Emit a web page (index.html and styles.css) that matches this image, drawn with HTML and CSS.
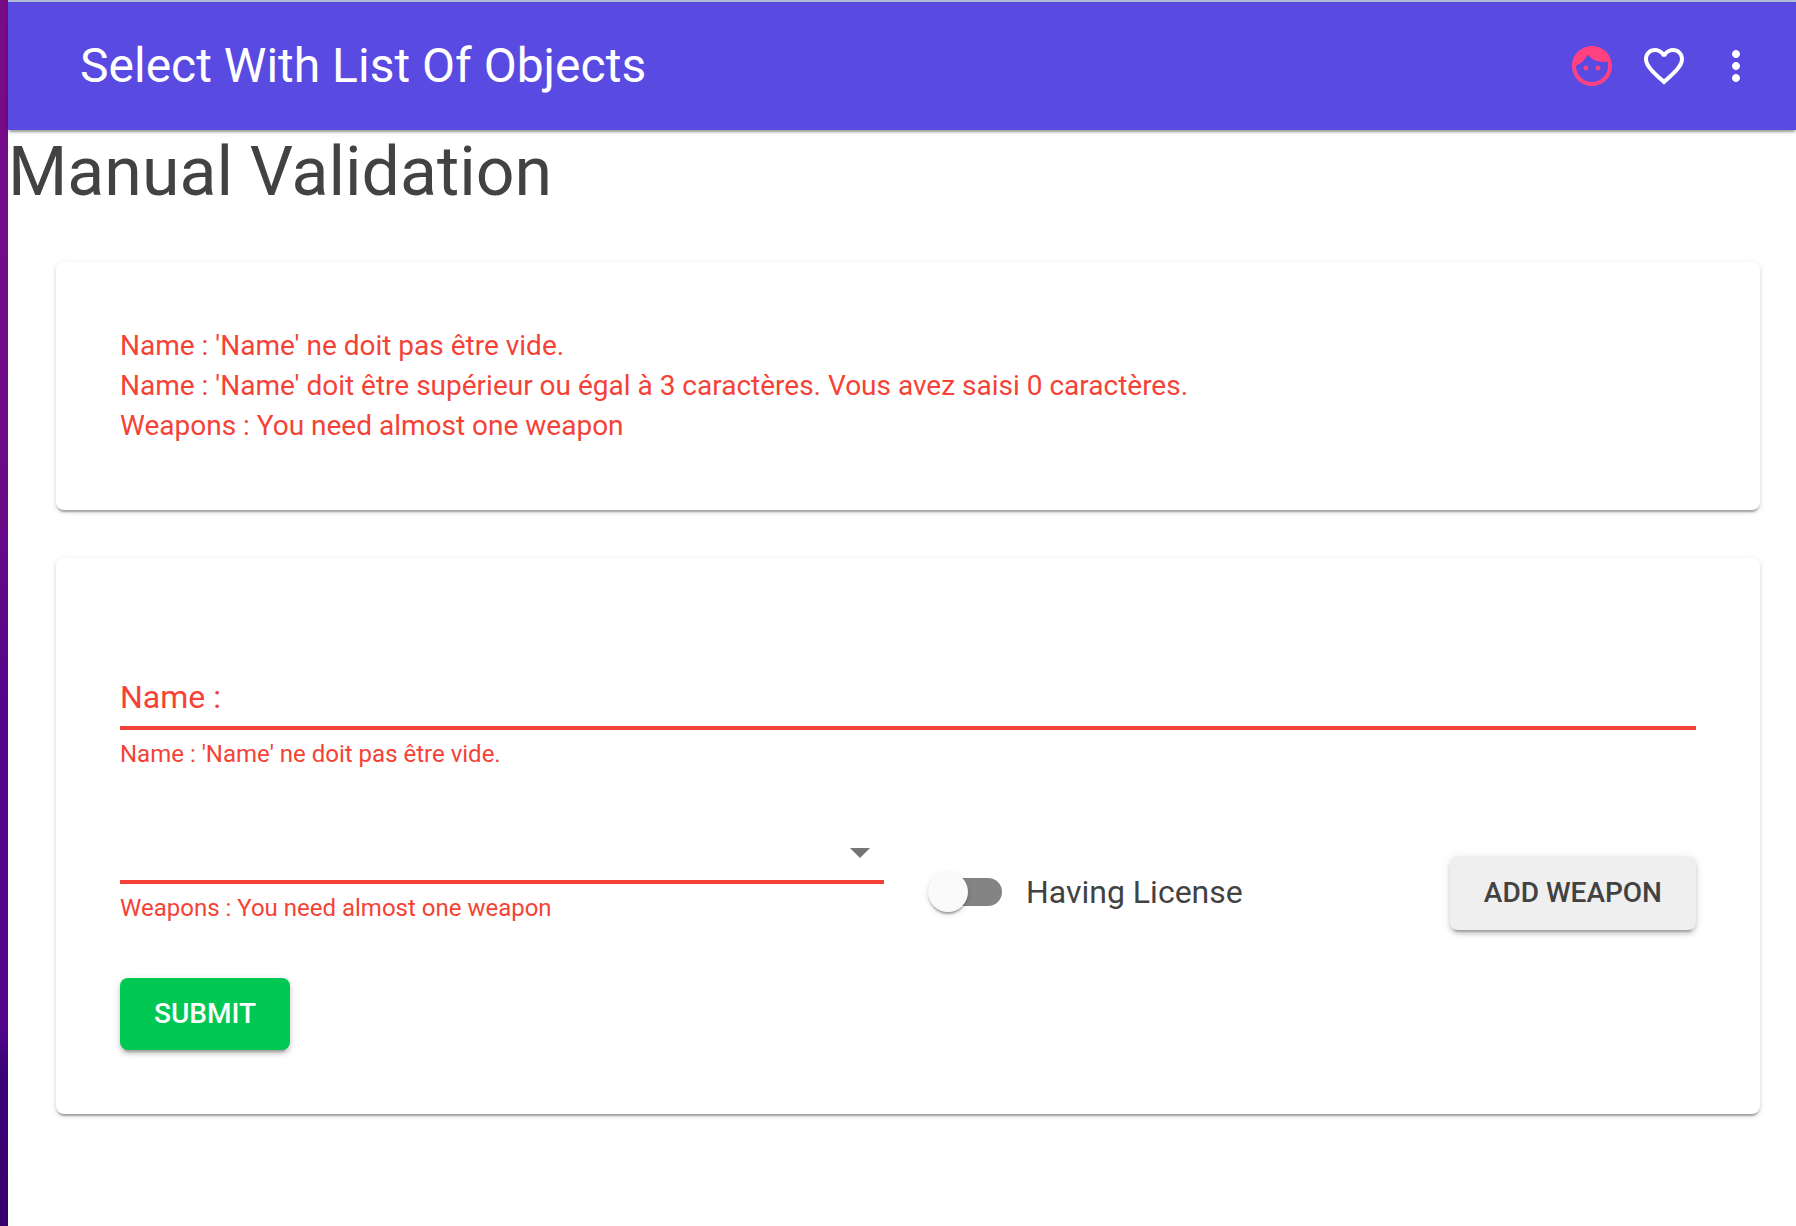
FILE: index.html
```html
<!DOCTYPE html>
<html lang="fr">
<head>
<meta charset="utf-8">
<meta name="viewport" content="width=device-width, initial-scale=1">
<title>Select With List Of Objects</title>
<link rel="stylesheet" href="styles.css">
</head>
<body>
<div class="window">
  <header class="appbar">
    <div class="appbar-title">Select With List Of Objects</div>
    <nav class="appbar-actions" aria-label="Actions">
      <button class="icon-button icon-button-accent" type="button" aria-label="Profile">
        <svg class="icon" viewBox="0 0 24 24" fill="currentColor" aria-hidden="true"><path d="M10.25 13c0 .69-.56 1.25-1.25 1.25S7.75 13.69 7.75 13s.56-1.25 1.25-1.25 1.25.56 1.25 1.25zM15 11.75c-.69 0-1.25.56-1.25 1.25s.56 1.25 1.25 1.25 1.25-.56 1.25-1.25-.56-1.25-1.25-1.25zm7 .25c0 5.52-4.48 10-10 10S2 17.52 2 12 6.48 2 12 2s10 4.48 10 10zm-2 0c0-.78-.12-1.53-.33-2.24-.7.15-1.42.24-2.17.24-3.13 0-5.92-1.44-7.76-3.69C8.69 8.87 6.6 10.88 4 11.86c.01.04 0 .09 0 .14 0 4.41 3.59 8 8 8s8-3.59 8-8z"/></svg>
      </button>
      <button class="icon-button" type="button" aria-label="Favorite">
        <svg class="icon" viewBox="0 0 24 24" fill="currentColor" aria-hidden="true"><path d="M16.5 3c-1.74 0-3.41.81-4.5 2.09C10.91 3.81 9.24 3 7.5 3 4.42 3 2 5.42 2 8.5c0 3.78 3.4 6.86 8.55 11.54L12 21.35l1.45-1.32C18.6 15.36 22 12.28 22 8.5 22 5.42 19.58 3 16.5 3zm-4.4 15.55l-.1.1-.1-.1C7.14 14.24 4 11.39 4 8.5 4 6.5 5.5 5 7.5 5c1.54 0 3.04.99 3.57 2.36h1.87C13.46 5.99 14.96 5 16.5 5c2 0 3.5 1.5 3.5 3.5 0 2.89-3.14 5.74-7.9 10.05z"/></svg>
      </button>
      <button class="icon-button" type="button" aria-label="More">
        <svg class="icon" viewBox="0 0 24 24" fill="currentColor" aria-hidden="true"><path d="M12 8c1.1 0 2-.9 2-2s-.9-2-2-2-2 .9-2 2 .9 2 2 2zm0 2c-1.1 0-2 .9-2 2s.9 2 2 2 2-.9 2-2-.9-2-2-2zm0 6c-1.1 0-2 .9-2 2s.9 2 2 2 2-.9 2-2-.9-2-2-2z"/></svg>
      </button>
    </nav>
  </header>
  <main>
    <h1 class="page-title">Manual Validation</h1>
    <div class="cards">
      <section class="card summary" aria-label="Errors">
        <div>Name : 'Name' ne doit pas être vide.</div>
        <div>Name : 'Name' doit être supérieur ou égal à 3 caractères. Vous avez saisi 0 caractères.</div>
        <div>Weapons : You need almost one weapon</div>
      </section>
      <form class="card form">
        <div class="field">
          <div class="control">
            <input class="input" id="name" type="text" aria-describedby="name-error" aria-invalid="true">
            <label class="input-label" for="name">Name :</label>
          </div>
          <div class="helper" id="name-error">Name : 'Name' ne doit pas être vide.</div>
        </div>
        <div class="weapon-row">
          <div class="field">
            <div class="control">
              <select class="input" aria-label="Weapons" aria-describedby="weapons-error" aria-invalid="true">
                <option value=""></option>
              </select>
              <svg class="icon dropdown-icon" viewBox="0 0 24 24" fill="currentColor" aria-hidden="true"><path d="M7 10l5 5 5-5z"/></svg>
            </div>
            <div class="helper" id="weapons-error">Weapons : You need almost one weapon</div>
          </div>
          <div class="weapon-actions">
            <label class="switch-label">
              <input class="switch" type="checkbox" role="switch">
              <span>Having License</span>
            </label>
            <button class="button" type="button">ADD WEAPON</button>
          </div>
        </div>
        <button class="button button-success" type="button">SUBMIT</button>
      </form>
    </div>
  </main>
</div>
</body>
</html>
```
FILE: styles.css
```css
* {
  box-sizing: border-box;
}

body {
  margin: 0;
  padding-left: 8px;
  background: linear-gradient(#7a0b88, #6c0a88 40%, #50058a 60%, #50058a 84%, #3c0378 87%, #38006e);
  color: #424242;
  font-family: Roboto, "Liberation Sans", sans-serif;
  font-size: 28px;
  line-height: 40px;
}

.window {
  min-height: 100vh;
  border-top: 2px solid #b4c0da;
  background: #fff;
}

.appbar {
  position: relative;
  display: flex;
  align-items: center;
  justify-content: space-between;
  min-height: 128px;
  padding: 0 24px 0 72px;
  background: #594ae2;
  color: #fff;
  box-shadow: 0 4px 2px -2px rgba(0, 0, 0, 0.2), 0 2px 2px rgba(0, 0, 0, 0.14), 0 2px 6px rgba(0, 0, 0, 0.12);
}

.appbar-title {
  font-size: 48px;
  line-height: 64px;
}

.appbar-actions {
  display: flex;
}

.icon-button {
  display: flex;
  padding: 12px;
  border: 0;
  border-radius: 50%;
  background: none;
  color: inherit;
}

.icon-button-accent {
  color: #ff4081;
}

.icon {
  display: block;
  width: 48px;
  height: 48px;
}

.page-title {
  margin: 0;
  font-size: 68px;
  font-weight: 400;
  line-height: 84px;
}

.cards {
  display: grid;
  gap: 48px;
  padding: 48px 36px 48px 48px;
}

.card {
  padding: 64px;
  border-radius: 8px;
  background: #fff;
  box-shadow: 0 4px 2px -2px rgba(0, 0, 0, 0.2), 0 2px 2px rgba(0, 0, 0, 0.14), 0 2px 6px rgba(0, 0, 0, 0.12);
}

.summary {
  color: #f44336;
}

.form {
  padding-top: 108px;
}

.control {
  position: relative;
}

.input {
  display: block;
  width: 100%;
  height: 64px;
  padding: 0;
  border: 0;
  border-bottom: 4px solid #f44336;
  border-radius: 0;
  outline: 0;
  appearance: none;
  background: none;
  color: inherit;
  font: inherit;
  font-size: 32px;
}

.input-label {
  position: absolute;
  top: 0;
  left: 0;
  color: #f44336;
  font-size: 32px;
  line-height: 62px;
  pointer-events: none;
}

.dropdown-icon {
  position: absolute;
  top: 8px;
  right: 0;
  color: #757575;
  pointer-events: none;
}

.helper {
  padding: 4px 0 2px;
  color: #f44336;
  font-size: 24px;
  line-height: 40px;
}

.weapon-row {
  display: grid;
  grid-template-columns: 1fr 1fr;
  align-items: end;
  gap: 48px;
  margin: 44px 0 48px;
}

.weapon-actions {
  display: flex;
  align-items: flex-start;
  justify-content: space-between;
}

.switch-label {
  display: flex;
  align-items: center;
  gap: 24px;
  min-height: 72px;
  margin-left: -4px;
  font-size: 32px;
}

.switch {
  position: relative;
  width: 74px;
  height: 40px;
  margin: 0;
  appearance: none;
}

.switch::before,
.switch::after {
  content: "";
  position: absolute;
}

.switch::before {
  inset: 6px 0 6px 6px;
  border-radius: 14px;
  background: #848484;
}

.switch::after {
  top: 0;
  left: 0;
  width: 40px;
  height: 40px;
  border-radius: 50%;
  background: #fafafa;
  box-shadow: 0 4px 2px -2px rgba(0, 0, 0, 0.2), 0 2px 2px rgba(0, 0, 0, 0.14), 0 2px 6px rgba(0, 0, 0, 0.12);
}

.button {
  padding: 16px 34px;
  border: 0;
  border-radius: 8px;
  background: #efefef;
  color: #424242;
  font: inherit;
  font-weight: 500;
  line-height: 42px;
  box-shadow: 0 6px 2px -4px rgba(0, 0, 0, 0.2), 0 4px 4px rgba(0, 0, 0, 0.14), 0 2px 10px rgba(0, 0, 0, 0.12);
}

.button-success {
  display: block;
  background: #00c853;
  color: #fff;
  line-height: 40px;
}
```
